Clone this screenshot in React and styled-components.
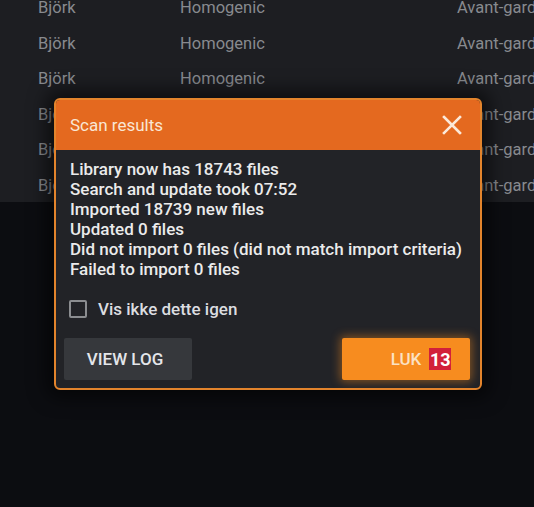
import React from "react";
import styled, { createGlobalStyle } from "styled-components";

const GlobalStyle = createGlobalStyle`
  html, body {
    margin: 0;
    padding: 0;
    background: #0c0d11;
  }
  body {
    font-family: Roboto, "Liberation Sans", sans-serif;
  }
`;

const Screen = styled.div`
  position: relative;
  width: 534px;
  height: 507px;
  overflow: hidden;
  background: #0c0d11;
`;

const Table = styled.div`
  height: 202px;
  overflow: hidden;
  background: #1d1e22;
`;

const Rows = styled.div`
  margin-top: -10px;
`;

const Row = styled.div`
  display: grid;
  grid-template-columns: 142px 277px 120px;
  align-items: center;
  height: 35.5px;
  padding-left: 38px;
  color: #888a8f;
  font-size: 16.5px;
  white-space: nowrap;
`;

const Dialog = styled.div`
  position: absolute;
  left: 54px;
  top: 98px;
  width: 428px;
  height: 292px;
  box-sizing: border-box;
  display: flex;
  flex-direction: column;
  border: 2px solid #e3842c;
  border-radius: 6px;
  background: #222327;
  overflow: hidden;
  box-shadow: 0 0 18px 8px rgba(0, 0, 0, 0.55);
`;

const Header = styled.div`
  display: flex;
  align-items: center;
  justify-content: space-between;
  height: 50px;
  padding: 0 18px 0 14px;
  background: #e4691f;
  flex-shrink: 0;
`;

const Title = styled.h2`
  margin: 0;
  font-size: 17px;
  font-weight: 400;
  color: #f9e6d4;
`;

const CloseButton = styled.button`
  display: flex;
  padding: 0;
  border: 0;
  background: none;
  cursor: pointer;
`;

const Body = styled.div`
  display: flex;
  flex-direction: column;
  padding: 9px 14px 0;
  flex: 1;
`;

const Lines = styled.div`
  font-size: 17px;
  font-weight: 500;
  line-height: 20px;
  color: #ebebeb;
`;

const CheckRow = styled.label`
  display: flex;
  align-items: center;
  gap: 11px;
  margin-top: 20px;
  font-size: 17px;
  font-weight: 500;
  color: #dcdde0;
`;

const Box = styled.span`
  width: 14px;
  height: 14px;
  margin-left: -1px;
  border: 2px solid #8b8d90;
  border-radius: 2px;
`;

const Actions = styled.div`
  display: flex;
  justify-content: space-between;
  margin: 19px -4px 0 -6px;
`;

const Button = styled.button`
  display: flex;
  align-items: center;
  justify-content: center;
  gap: 8px;
  width: 128px;
  height: 42px;
  border: 0;
  border-radius: 2px;
  font-family: Roboto, "Liberation Sans", sans-serif;
  font-size: 17px;
  font-weight: 500;
  text-transform: uppercase;
  cursor: pointer;
  background: ${({ $primary }) => ($primary ? "#f78c1f" : "#36383c")};
  color: ${({ $primary }) => ($primary ? "#fbe2c4" : "#e4e6ea")};
  box-shadow: ${({ $primary }) =>
    $primary ? "0 0 10px 2px rgba(247, 140, 31, 0.45)" : "none"};
  padding-left: ${({ $primary }) => ($primary ? "36px" : "0")};
`;

const Badge = styled.span`
  display: inline-flex;
  align-items: center;
  justify-content: center;
  width: 22px;
  height: 22px;
  background: #d2203a;
  color: #ffffff;
  font-size: 18px;
  font-weight: 700;
`;

const rows = Array.from({ length: 6 });

const results = [
  "Library now has 18743 files",
  "Search and update took 07:52",
  "Imported 18739 new files",
  "Updated 0 files",
  "Did not import 0 files (did not match import criteria)",
  "Failed to import 0 files",
];

export default function App() {
  return (
    <Screen>
      <GlobalStyle />
      <Table>
        <Rows>
          {rows.map((_, i) => (
            <Row key={i}>
              <span>Björk</span>
              <span>Homogenic</span>
              <span>Avant-garde</span>
            </Row>
          ))}
        </Rows>
      </Table>
      <Dialog>
        <Header>
          <Title>Scan results</Title>
          <CloseButton aria-label="Close">
            <svg width="20" height="20" viewBox="0 0 20 20">
              <path
                d="M2 2 L18 18 M18 2 L2 18"
                stroke="#fbe8d8"
                strokeWidth="2.6"
                strokeLinecap="square"
              />
            </svg>
          </CloseButton>
        </Header>
        <Body>
          <Lines>
            {results.map((line) => (
              <div key={line}>{line}</div>
            ))}
          </Lines>
          <CheckRow>
            <Box />
            Vis ikke dette igen
          </CheckRow>
          <Actions>
            <Button>View log</Button>
            <Button $primary>
              Luk <Badge>13</Badge>
            </Button>
          </Actions>
        </Body>
      </Dialog>
    </Screen>
  );
}
